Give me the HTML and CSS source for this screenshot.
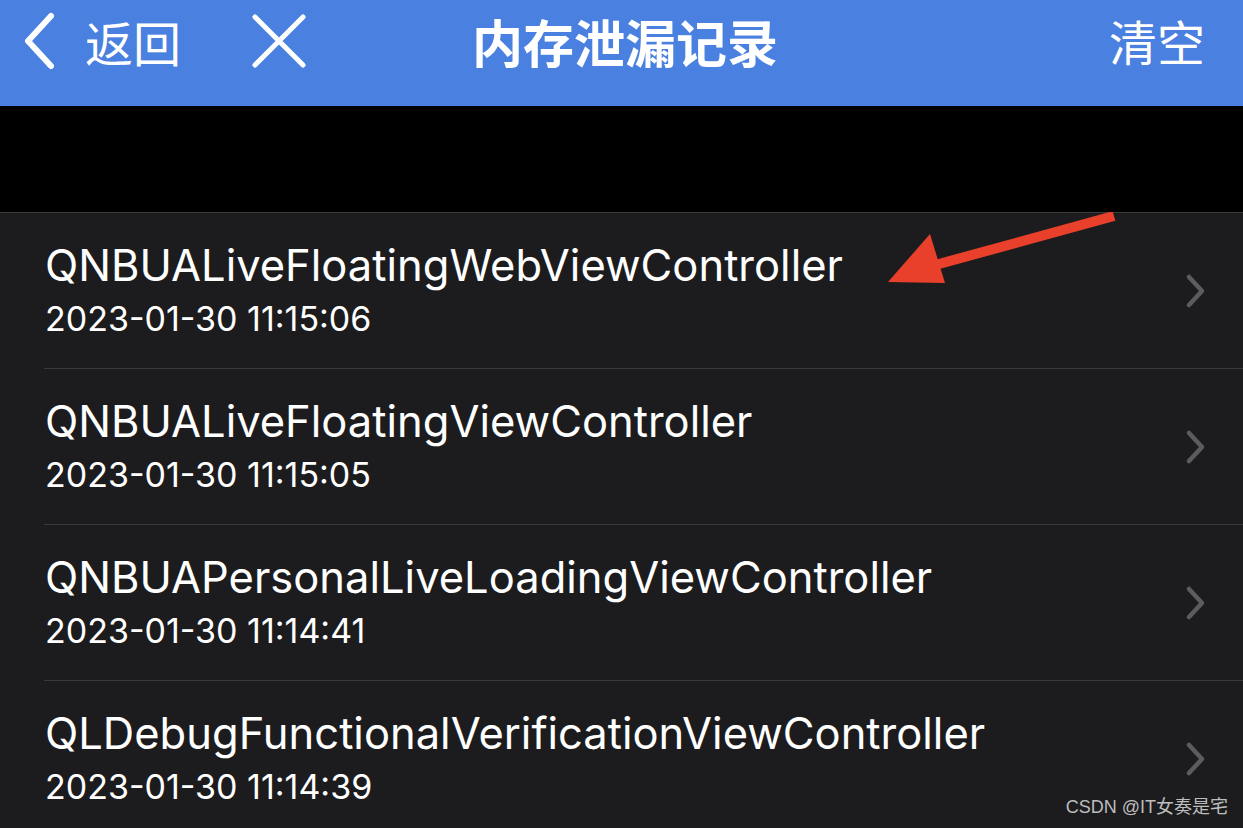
FILE: index.html
```html
<!DOCTYPE html>
<html lang="zh">
<head>
<meta charset="utf-8">
<link rel="stylesheet" href="styles.css">
</head>
<body>
<div class="page">
  <header class="navbar">
    <div class="nav-left">
      <svg class="back-icon" width="34" height="58" viewBox="0 0 34 58"><path d="M29 4 L6 29 L29 54" fill="none" stroke="#fff" stroke-width="6" stroke-linecap="round" stroke-linejoin="round"/></svg>
      <span class="nav-text back-text">返回</span>
      <svg class="close-icon" width="56" height="56" viewBox="0 0 56 56"><path d="M4 4 L52 52 M52 4 L4 52" fill="none" stroke="#fff" stroke-width="5" stroke-linecap="round"/></svg>
    </div>
    <div class="nav-title">内存泄漏记录</div>
    <div class="nav-right"><span class="nav-text">清空</span></div>
  </header>
  <div class="spacer"></div>
  <ul class="list">
    <li class="row">
      <div class="row-body">
        <div class="row-title">QNBUALiveFloatingWebViewController</div>
        <div class="row-date">2023-01-30 11:15:06</div>
      </div>
      <svg class="chev" width="22" height="36" viewBox="0 0 22 36"><path d="M4 4 L17 18 L4 32" fill="none" stroke="#5b5b60" stroke-width="4.5" stroke-linecap="round" stroke-linejoin="round"/></svg>
    </li>
    <li class="row">
      <div class="row-body">
        <div class="row-title">QNBUALiveFloatingViewController</div>
        <div class="row-date">2023-01-30 11:15:05</div>
      </div>
      <svg class="chev" width="22" height="36" viewBox="0 0 22 36"><path d="M4 4 L17 18 L4 32" fill="none" stroke="#5b5b60" stroke-width="4.5" stroke-linecap="round" stroke-linejoin="round"/></svg>
    </li>
    <li class="row">
      <div class="row-body">
        <div class="row-title">QNBUAPersonalLiveLoadingViewController</div>
        <div class="row-date">2023-01-30 11:14:41</div>
      </div>
      <svg class="chev" width="22" height="36" viewBox="0 0 22 36"><path d="M4 4 L17 18 L4 32" fill="none" stroke="#5b5b60" stroke-width="4.5" stroke-linecap="round" stroke-linejoin="round"/></svg>
    </li>
    <li class="row">
      <div class="row-body">
        <div class="row-title">QLDebugFunctionalVerificationViewController</div>
        <div class="row-date">2023-01-30 11:14:39</div>
      </div>
      <svg class="chev" width="22" height="36" viewBox="0 0 22 36"><path d="M4 4 L17 18 L4 32" fill="none" stroke="#5b5b60" stroke-width="4.5" stroke-linecap="round" stroke-linejoin="round"/></svg>
    </li>
  </ul>
  <svg class="annot-arrow" width="240" height="90" viewBox="0 0 240 90"><path d="M226 4 L40 55" stroke="#e8402a" stroke-width="10" fill="none"/><polygon points="0,70 42,22 57,71" fill="#e8402a"/></svg>
  <div class="watermark">CSDN @IT女奏是宅</div>
</div>
</body>
</html>
```
FILE: styles.css
```css
html, body {
  margin: 0;
  padding: 0;
  background: #1c1c1e;
}
.page {
  position: relative;
  width: 1243px;
  height: 828px;
  overflow: hidden;
  font-family: Inter, "Noto Sans CJK SC", sans-serif;
  background: #1c1c1e;
}
.navbar {
  height: 106px;
  background: #4a80e0;
  display: flex;
  align-items: center;
  position: relative;
  color: #fff;
}
.nav-left {
  display: flex;
  align-items: center;
  padding-left: 22px;
  height: 100%;
  padding-bottom: 25px;
  box-sizing: border-box;
}
.back-icon { display: block; }
.back-text { margin-left: 29px; }
.close-icon { margin-left: 70px; }
.nav-text {
  font-family: "Noto Sans CJK SC", sans-serif;
  font-size: 48px;
  line-height: 1;
  color: #fff;
}
.nav-title {
  position: absolute;
  left: 472px;
  top: 16px;
  font-family: "Noto Sans CJK SC", sans-serif;
  font-size: 51px;
  font-weight: 700;
  line-height: 1;
}
.nav-right {
  margin-left: auto;
  padding-right: 38px;
  padding-bottom: 25px;
}
.spacer {
  height: 106px;
  background: #000;
  border-bottom: 1px solid #3a3a3c;
}
.list {
  list-style: none;
  margin: 0;
  padding: 0 0 0 44px;
}
.row {
  height: 155px;
  display: flex;
  align-items: center;
  border-bottom: 1px solid #3a3a3c;
  padding-right: 36px;
}
.row-body {
  flex: 1;
  padding-left: 1px;
  padding-bottom: 2px;
}
.row-title {
  font-size: 43.5px;
  line-height: 52px;
  color: #fff;
}
.row-date {
  font-size: 34px;
  line-height: 44px;
  margin-top: 6px;
  color: #fff;
}
.chev { display: block; }
.annot-arrow {
  position: absolute;
  left: 888px;
  top: 212px;
}
.watermark {
  position: absolute;
  right: 15px;
  bottom: 10px;
  font-family: "Liberation Sans", "Noto Sans CJK SC", sans-serif;
  font-size: 18px;
  color: #bdbdbd;
}
```
